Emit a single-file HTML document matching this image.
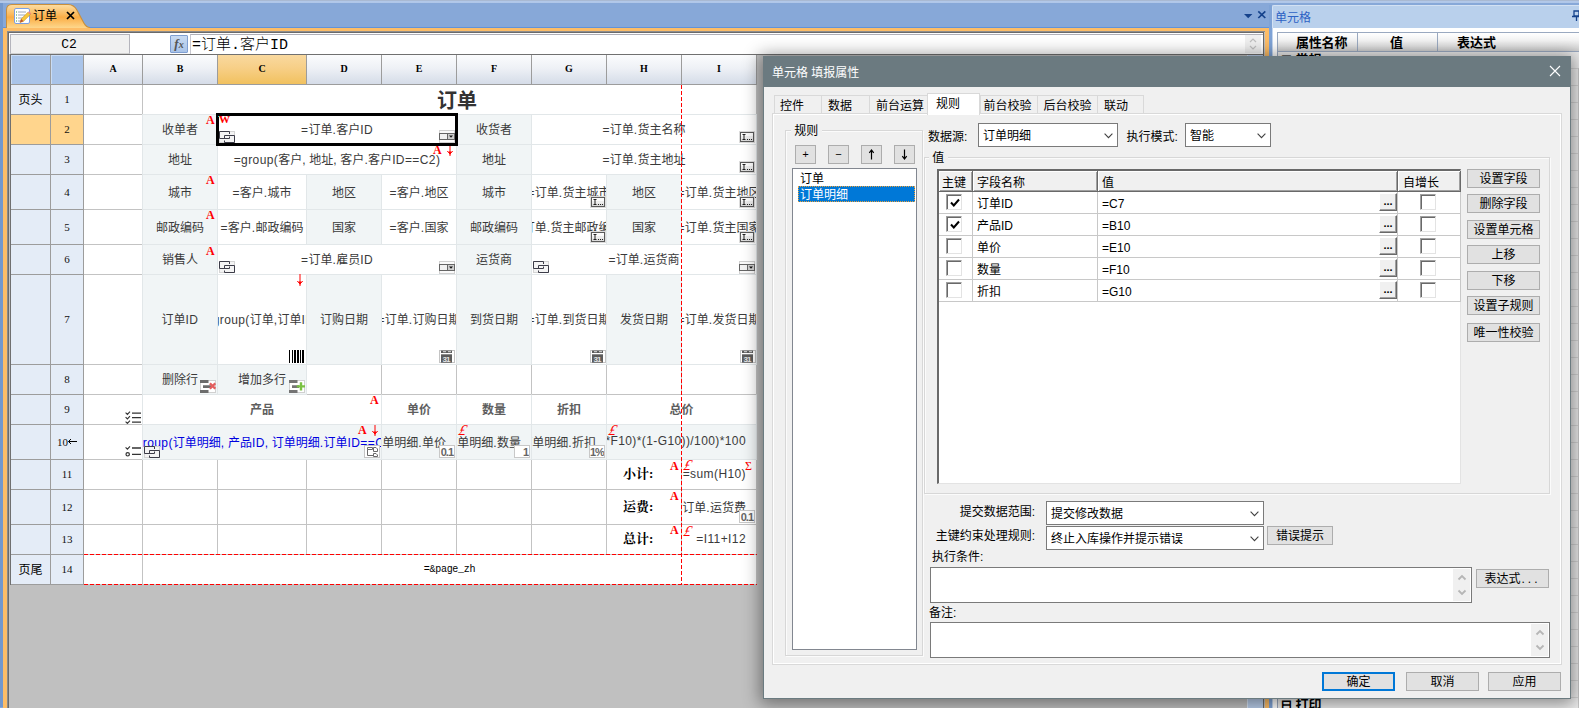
<!DOCTYPE html>
<html lang="zh-CN"><head><meta charset="utf-8"><title>订单</title>
<style>
*{box-sizing:border-box;margin:0;padding:0}
html,body{width:1579px;height:708px;overflow:hidden}
body{position:relative;background:#87a8d8;font-family:"Liberation Sans","Noto Sans CJK SC",sans-serif;font-size:12px;color:#000}
.abs{position:absolute}
#topstrip{left:0;top:0;width:1579px;height:3px;background:linear-gradient(#a9b9d2 0,#a9b9d2 33%,#b3c9e9 34%,#afc6e8)}
#leftedge{left:0;top:3px;width:3px;height:704px;background:#7398cd}
#oframe{left:3px;top:28px;width:1266px;height:680px;background:#fdbd67}
#docarea{left:7px;top:31px;width:1258px;height:677px;background:#c0c0c0;border-left:1px solid #8a8a8a;border-top:1px solid #8e8e8e}
#docarea2{left:8px;top:32px;width:1256px;height:676px;border-left:1px solid #6a6a6a;border-top:1px solid #6a6a6a;border-right:1px solid #6a6a6a}
#fbar{left:9px;top:33px;width:1254px;height:21px;background:#fff}
#tab{left:6px;top:4px;width:84px;height:24px}
#tabtxt{left:33px;top:9px;font-size:12px;line-height:15px;color:#000;white-space:nowrap}
#tabx{left:66px;top:11px;width:9px;height:9px}
#namebox{left:10px;top:34px;width:120px;height:20px;background:#f0f0f0;border:1px solid #b4b4bc;border-bottom-color:#d0d0d0;font-family:"Liberation Mono","Noto Sans CJK SC",monospace;font-size:13px;line-height:19px;text-align:center;color:#000;padding-right:2px}
#fx{left:170px;top:35px;width:18px;height:18px;border:1px solid #7f9fd2;background:linear-gradient(#c9dbf2,#a9c3e8);border-radius:1px;font-family:"Liberation Serif",serif;font-style:italic;font-weight:bold;font-size:13px;line-height:15px;color:#555;text-align:center}
#finput{left:190px;top:34px;width:1073px;height:20px;border:1px solid #b0b0b8;border-left-color:#c8c8d0;border-right:none;border-bottom:none;background:#fff}
#ftext{left:192px;top:36px;font-family:"Liberation Mono","Noto Sans CJK SC",monospace;font-size:15px;line-height:20px;letter-spacing:0;white-space:nowrap;color:#000;font-weight:300}
#fscroll{left:1245px;top:35px;width:16px;height:18px;background:#f0f0f0}
#grid{left:0;top:0;width:760px;height:590px}
.c{position:absolute;border:1px solid #c3c3c3;background:#fff;overflow:hidden;display:flex;align-items:center;justify-content:center;white-space:nowrap;font-size:12px;color:#3a3a3a}
.c.sh{background:#f1f5f6;border-color:#e2e7e9}
.c.lb{border-color:#e2e7e9}
.c.lb9{border-color:#c3c3c3 #e2e7e9 #e2e7e9 #e2e7e9}
.c.hd{border-color:#9c9c9c}
.corner{background:#a9c4e9;border-color:#9c9c9c;box-shadow:inset 1px 1px 0 #c9dcf5}
.ch{background:linear-gradient(#fbfcfd,#eef1f6 45%,#d5dce8);border-color:#9c9c9c;font-family:"Liberation Serif",serif;font-size:10px;color:#000;font-weight:bold;padding-bottom:2px}
.ch.hl{background:linear-gradient(#f9d99f,#f7cf87 45%,#f1c15f)}
.rh{background:#e4ecf7;border-color:#9c9c9c;color:#000}
.rh.hl{background:#ffd58d}
.rn{font-family:"Liberation Serif",serif;font-size:11px;padding-bottom:1px;color:#111}
.bt{font-size:12px;position:relative;top:-1px}
.l{letter-spacing:.4px}
.tx{position:relative;top:-1px}
.c.ra{justify-content:flex-end;padding-right:10px}
.b{font-weight:bold}
.c.b{color:#5e5e5e;font-weight:bold}
.ttl{font-size:20px;font-weight:bold;color:#333}
.blue{color:#0000e0}
.sim{font-family:"Liberation Serif","Noto Serif CJK SC",serif;font-weight:bold;color:#000;font-size:13px;position:relative;top:-2px}
.pz{font-family:"Liberation Mono",monospace;font-size:10px;color:#000;letter-spacing:-.3px}
.ic{position:absolute}
.red{position:absolute;color:#f00;font-family:"Liberation Serif",serif;font-weight:bold;font-size:12px;line-height:12px}
#sel{left:216px;top:113px;width:242px;height:33px;border:3px solid #000}

.idots{width:16px;height:12px;border:1px solid #d8d8d8;background:#fff;padding:0}
.idots:before{content:"";position:absolute;left:0;top:0;right:0;bottom:0;border:1px solid #5a5a5a;background:linear-gradient(#fff,#d8d8d8)}
.idots span{position:absolute;left:3px;top:0;font-family:"Liberation Mono",monospace;font-size:9px;line-height:10px;color:#222}
.idots b{position:absolute;left:8px;top:-2px;font-family:"Liberation Sans",sans-serif;font-size:8px;line-height:10px;color:#222;letter-spacing:-.3px;font-weight:bold}
.numi{width:16px;height:13px;border:1px solid #c8c8c8;background:#fff;font-family:"Liberation Sans",sans-serif;font-weight:bold;font-size:11px;line-height:12px;color:#666;text-align:right;letter-spacing:-1px;padding-right:1px;overflow:hidden;white-space:nowrap}
.vd{position:absolute;width:1px;background:repeating-linear-gradient(180deg,#f00 0,#f00 4px,transparent 4px,transparent 6px)}
.hdd{position:absolute;height:1px;background:repeating-linear-gradient(90deg,#f00 0,#f00 4px,transparent 4px,transparent 6px)}

.t{white-space:nowrap;font-size:12px;color:#000}
.dlg{background:#f0f0f0;border:1px solid #6b7b80;box-shadow:0 2px 16px 3px rgba(0,0,0,.42)}
.dtitle{background:#6b7a80}
.tabu{background:#f0f0f0;border:1px solid #d9d9d9;border-bottom:none}
.tabs{background:#fff;border:1px solid #d9d9d9;border-bottom:none}
.tpanel{background:#f0f0f0;border:1px solid #d9d9d9;box-shadow:inset 0 0 0 1px #fff}
.grp{border:1px solid #d7d7d7;box-shadow:inset 1px 1px 0 #fbfbfb,1px 1px 0 #fbfbfb}
.glab{background:#f0f0f0}
.btn{background:#e1e1e1;border:1px solid #adadad;text-align:center;font-size:12px;white-space:nowrap;color:#000}
.btn.def{border:2px solid #0078d7;line-height:16px !important}
.btn.sm{font-family:"Liberation Mono",monospace;font-size:11px}
.list{background:#fff;border:1px solid #828790}
.lsel{background:#0078d7;outline:1px dotted #e9a03a;outline-offset:-1px}
.selbox{background:#fff;border:1px solid #7a7a7a;padding-left:4px;padding-top:1px;white-space:nowrap;font-size:12px}
.tbl{background:#fff;border-top:2px solid #696969;border-left:2px solid #696969;border-right:1px solid #e3e3e3;border-bottom:1px solid #e3e3e3}
.th{background:#f0f0f0;border-right:1px solid #696969;border-bottom:1px solid #696969;box-shadow:inset 1px 1px 0 #fff,inset -1px -1px 0 #a0a0a0}
.cb{background:#fff;border:1px solid;border-color:#a0a0a0 #e3e3e3 #e3e3e3 #a0a0a0;box-shadow:inset 1px 1px 0 #696969}
.cb svg{position:absolute;left:2px;top:2px}
.b3{background:#f0f0f0;border:1px solid;border-color:#fff #696969 #696969 #fff;box-shadow:inset -1px -1px 0 #a0a0a0;text-align:center;font-size:11px;font-weight:bold;line-height:14px}
.ta{background:#fff;border:1px solid #7a7a7a}
.scr{position:absolute;right:1px;top:1px;bottom:1px;width:17px;background:#f0f0f0;display:flex;align-items:center;justify-content:center}
</style></head>
<body>
<div id="topstrip" class="abs"></div>
<div id="leftedge" class="abs"></div>
<div class="abs" style="left:3px;top:27px;width:1266px;height:1px;background:#6293d8"></div>
<div id="oframe" class="abs"></div>
<div class="abs" style="left:6px;top:4px;width:84px;height:24px;background:#c98f3c;clip-path:path('M0 24V6Q0 0 6 0H62Q68.5 0 71.5 6L78.5 19Q81 23 84 23V24Z')"></div>
<div class="abs" style="left:6px;top:4px;width:84px;height:24px;background:linear-gradient(#fce0a8,#fbb85a 45%,#fbad45 55%,#fdd78c);clip-path:path('M1 24V6Q1 1 6 1H62Q67.5 1 70.5 6.5L77.5 19.5Q80 24 84 24Z')"></div>
<svg class="abs" style="left:14px;top:8px" width="18" height="16" viewBox="0 0 18 16"><rect x=".5" y=".5" width="15" height="15" rx="1.5" fill="#fff" stroke="#7da0e0"/><g stroke="#9aa6b8" stroke-width="1"><path d="M4 4H12M4 7H11M4 10H9M4 13H8"/></g><g fill="#3a9a3a"><rect x="2" y="3.5" width="1" height="1"/><rect x="2" y="6.5" width="1" height="1"/><rect x="2" y="9.5" width="1" height="1"/><rect x="2" y="12.5" width="1" height="1"/></g><path d="M6 14.5 L7.2 11 L14 4.2 L16.3 6.5 L9.5 13.3 Z" fill="#f7c83a" stroke="#c98a1a" stroke-width=".6"/><path d="M6 14.5 L7.2 11 L9.5 13.3 Z" fill="#c05030"/><path d="M14 4.2 L15 3.2 L17.3 5.5 L16.3 6.5 Z" fill="#e88"/></svg>
<div id="tabtxt" class="abs">订单</div>
<svg id="tabx" class="abs" viewBox="0 0 9 9"><path d="M1 1L8 8M8 1L1 8" stroke="#000" stroke-width="1.7"/></svg>
<svg class="abs" style="left:1243px;top:10px" width="24" height="10" viewBox="0 0 24 10"><path d="M1 4H9.4L5.2 8.2Z" fill="#15428b"/><path d="M15.3 1.3L22.3 8M22.3 1.3L15.3 8" stroke="#15428b" stroke-width="1.7"/></svg>
<div id="docarea" class="abs"></div><div id="docarea2" class="abs"></div>
<div id="fbar" class="abs"></div>
<div id="namebox" class="abs">C2</div>
<div id="fx" class="abs">f<span style="font-size:10px">x</span></div>
<div id="finput" class="abs"></div>
<div id="ftext" class="abs">=订单.客户ID</div>
<div id="fscroll" class="abs"><svg width="16" height="18" viewBox="0 0 16 18"><path d="M5 7L8 4L11 7M5 11L8 14L11 11" fill="none" stroke="#c0c0c0" stroke-width="1.2"/></svg></div>
<div id="grid" class="abs">
<div class="c " style="left:83px;top:84px;width:60px;height:31px;"></div>
<div class="c " style="left:142px;top:84px;width:615px;height:31px;"><span class="ttl" style="margin-left:15px">订单</span></div>
<div class="c " style="left:83px;top:114px;width:60px;height:31px;"></div>
<div class="c " style="left:83px;top:144px;width:60px;height:31px;"></div>
<div class="c " style="left:83px;top:174px;width:60px;height:36px;"></div>
<div class="c " style="left:83px;top:209px;width:60px;height:36px;"></div>
<div class="c " style="left:83px;top:244px;width:60px;height:31px;"></div>
<div class="c " style="left:83px;top:274px;width:60px;height:91px;"></div>
<div class="c " style="left:83px;top:364px;width:60px;height:31px;"></div>
<div class="c " style="left:306px;top:364px;width:76px;height:31px;"></div>
<div class="c " style="left:381px;top:364px;width:76px;height:31px;"></div>
<div class="c " style="left:456px;top:364px;width:76px;height:31px;"></div>
<div class="c " style="left:531px;top:364px;width:76px;height:31px;"></div>
<div class="c " style="left:606px;top:364px;width:76px;height:31px;"></div>
<div class="c " style="left:681px;top:364px;width:76px;height:31px;"></div>
<div class="c " style="left:83px;top:394px;width:60px;height:31px;"></div>
<div class="c " style="left:83px;top:424px;width:60px;height:36px;"></div>
<div class="c " style="left:83px;top:459px;width:60px;height:31px;"></div>
<div class="c " style="left:142px;top:459px;width:76px;height:31px;"></div>
<div class="c " style="left:217px;top:459px;width:90px;height:31px;"></div>
<div class="c " style="left:306px;top:459px;width:76px;height:31px;"></div>
<div class="c " style="left:381px;top:459px;width:76px;height:31px;"></div>
<div class="c " style="left:456px;top:459px;width:76px;height:31px;"></div>
<div class="c " style="left:531px;top:459px;width:76px;height:31px;"></div>
<div class="c " style="left:606px;top:459px;width:76px;height:31px;justify-content:flex-start;padding-left:16px"><span class="sim">小计:</span></div>
<div class="c ra" style="left:681px;top:459px;width:76px;height:31px;"><span class="tx"><span class="l">=sum(H10)</span></span></div>
<div class="c " style="left:83px;top:489px;width:60px;height:36px;"></div>
<div class="c " style="left:142px;top:489px;width:76px;height:36px;"></div>
<div class="c " style="left:217px;top:489px;width:90px;height:36px;"></div>
<div class="c " style="left:306px;top:489px;width:76px;height:36px;"></div>
<div class="c " style="left:381px;top:489px;width:76px;height:36px;"></div>
<div class="c " style="left:456px;top:489px;width:76px;height:36px;"></div>
<div class="c " style="left:531px;top:489px;width:76px;height:36px;"></div>
<div class="c " style="left:606px;top:489px;width:76px;height:36px;justify-content:flex-start;padding-left:16px"><span class="sim">运费:</span></div>
<div class="c ra" style="left:681px;top:489px;width:76px;height:36px;"><span class="tx"><span class="l">=</span>订单<span class="l">.</span>运货费</span></div>
<div class="c " style="left:83px;top:524px;width:60px;height:31px;"></div>
<div class="c " style="left:142px;top:524px;width:76px;height:31px;"></div>
<div class="c " style="left:217px;top:524px;width:90px;height:31px;"></div>
<div class="c " style="left:306px;top:524px;width:76px;height:31px;"></div>
<div class="c " style="left:381px;top:524px;width:76px;height:31px;"></div>
<div class="c " style="left:456px;top:524px;width:76px;height:31px;"></div>
<div class="c " style="left:531px;top:524px;width:76px;height:31px;"></div>
<div class="c " style="left:606px;top:524px;width:76px;height:31px;justify-content:flex-start;padding-left:16px"><span class="sim">总计:</span></div>
<div class="c ra" style="left:681px;top:524px;width:76px;height:31px;"><span class="tx"><span class="l">=I11+I12</span></span></div>
<div class="c " style="left:83px;top:554px;width:60px;height:31px;"></div>
<div class="c " style="left:142px;top:554px;width:615px;height:31px;"><span class="pz">=&amp;page_zh</span></div>
<div class="c  lb" style="left:217px;top:114px;width:240px;height:31px;"><span class="tx"><span class="l">=</span>订单<span class="l">.</span>客户<span class="l">ID</span></span></div>
<div class="c  lb" style="left:531px;top:114px;width:226px;height:31px;"><span class="tx"><span class="l">=</span>订单<span class="l">.</span>货主名称</span></div>
<div class="c  lb" style="left:217px;top:144px;width:240px;height:31px;"><span class="tx"><span class="l">=group(</span>客户<span class="l">,</span> 地址<span class="l">,</span> 客户<span class="l">.</span>客户<span class="l">ID==C2)</span></span></div>
<div class="c  lb" style="left:531px;top:144px;width:226px;height:31px;"><span class="tx"><span class="l">=</span>订单<span class="l">.</span>货主地址</span></div>
<div class="c  lb" style="left:217px;top:174px;width:90px;height:36px;"><span class="tx"><span class="l">=</span>客户<span class="l">.</span>城市</span></div>
<div class="c  lb" style="left:381px;top:174px;width:76px;height:36px;"><span class="tx"><span class="l">=</span>客户<span class="l">.</span>地区</span></div>
<div class="c  lb" style="left:531px;top:174px;width:76px;height:36px;"><span class="tx"><span class="l">=</span>订单<span class="l">.</span>货主城市</span></div>
<div class="c  lb" style="left:681px;top:174px;width:76px;height:36px;"><span class="tx"><span class="l">=</span>订单<span class="l">.</span>货主地区</span></div>
<div class="c  lb" style="left:217px;top:209px;width:90px;height:36px;"><span class="tx"><span class="l">=</span>客户<span class="l">.</span>邮政编码</span></div>
<div class="c  lb" style="left:381px;top:209px;width:76px;height:36px;"><span class="tx"><span class="l">=</span>客户<span class="l">.</span>国家</span></div>
<div class="c  lb" style="left:531px;top:209px;width:76px;height:36px;"><span class="tx"><span class="l">=</span>订单<span class="l">.</span>货主邮政编码</span></div>
<div class="c  lb" style="left:681px;top:209px;width:76px;height:36px;"><span class="tx"><span class="l">=</span>订单<span class="l">.</span>货主国家</span></div>
<div class="c  lb" style="left:217px;top:244px;width:240px;height:31px;"><span class="tx"><span class="l">=</span>订单<span class="l">.</span>雇员<span class="l">ID</span></span></div>
<div class="c  lb" style="left:531px;top:244px;width:226px;height:31px;"><span class="tx"><span class="l">=</span>订单<span class="l">.</span>运货商</span></div>
<div class="c  lb" style="left:217px;top:274px;width:90px;height:91px;"><span class="tx"><span class="l">=group(</span>订单<span class="l">,</span>订单<span class="l">ID)</span></span></div>
<div class="c  lb" style="left:381px;top:274px;width:76px;height:91px;"><span class="tx"><span class="l">=</span>订单<span class="l">.</span>订购日期</span></div>
<div class="c  lb" style="left:531px;top:274px;width:76px;height:91px;"><span class="tx"><span class="l">=</span>订单<span class="l">.</span>到货日期</span></div>
<div class="c  lb" style="left:681px;top:274px;width:76px;height:91px;"><span class="tx"><span class="l">=</span>订单<span class="l">.</span>发货日期</span></div>
<div class="c b lb9" style="left:142px;top:394px;width:240px;height:31px;"><span class="tx">产品</span></div>
<div class="c b lb9" style="left:381px;top:394px;width:76px;height:31px;"><span class="tx">单价</span></div>
<div class="c b lb9" style="left:456px;top:394px;width:76px;height:31px;"><span class="tx">数量</span></div>
<div class="c b lb9" style="left:531px;top:394px;width:76px;height:31px;"><span class="tx">折扣</span></div>
<div class="c b lb9" style="left:606px;top:394px;width:151px;height:31px;"><span class="tx">总价</span></div>
<div class="c sh " style="left:142px;top:114px;width:76px;height:31px;"><span class="tx">收单者</span></div>
<div class="c sh " style="left:456px;top:114px;width:76px;height:31px;"><span class="tx">收货者</span></div>
<div class="c sh " style="left:142px;top:144px;width:76px;height:31px;"><span class="tx">地址</span></div>
<div class="c sh " style="left:456px;top:144px;width:76px;height:31px;"><span class="tx">地址</span></div>
<div class="c sh " style="left:142px;top:174px;width:76px;height:36px;"><span class="tx">城市</span></div>
<div class="c sh " style="left:306px;top:174px;width:76px;height:36px;"><span class="tx">地区</span></div>
<div class="c sh " style="left:456px;top:174px;width:76px;height:36px;"><span class="tx">城市</span></div>
<div class="c sh " style="left:606px;top:174px;width:76px;height:36px;"><span class="tx">地区</span></div>
<div class="c sh " style="left:142px;top:209px;width:76px;height:36px;"><span class="tx">邮政编码</span></div>
<div class="c sh " style="left:306px;top:209px;width:76px;height:36px;"><span class="tx">国家</span></div>
<div class="c sh " style="left:456px;top:209px;width:76px;height:36px;"><span class="tx">邮政编码</span></div>
<div class="c sh " style="left:606px;top:209px;width:76px;height:36px;"><span class="tx">国家</span></div>
<div class="c sh " style="left:142px;top:244px;width:76px;height:31px;"><span class="tx">销售人</span></div>
<div class="c sh " style="left:456px;top:244px;width:76px;height:31px;"><span class="tx">运货商</span></div>
<div class="c sh " style="left:142px;top:274px;width:76px;height:91px;"><span class="tx">订单<span class="l">ID</span></span></div>
<div class="c sh " style="left:306px;top:274px;width:76px;height:91px;"><span class="tx">订购日期</span></div>
<div class="c sh " style="left:456px;top:274px;width:76px;height:91px;"><span class="tx">到货日期</span></div>
<div class="c sh " style="left:606px;top:274px;width:76px;height:91px;"><span class="tx">发货日期</span></div>
<div class="c sh " style="left:142px;top:364px;width:76px;height:31px;"><span class="tx">删除行</span></div>
<div class="c sh " style="left:217px;top:364px;width:90px;height:31px;"><span class="tx">增加多行</span></div>
<div class="c sh blue" style="left:142px;top:424px;width:240px;height:36px;"><span class="tx"><span class="l">=group(</span>订单明细<span class="l">,</span> 产品<span class="l">ID,</span> 订单明细<span class="l">.</span>订单<span class="l">ID==C7)</span></span></div>
<div class="c sh ra" style="left:381px;top:424px;width:76px;height:36px;"><span class="tx"><span class="l">=</span>订单明细<span class="l">.</span>单价</span></div>
<div class="c sh ra" style="left:456px;top:424px;width:76px;height:36px;"><span class="tx"><span class="l">=</span>订单明细<span class="l">.</span>数量</span></div>
<div class="c sh ra" style="left:531px;top:424px;width:76px;height:36px;"><span class="tx"><span class="l">=</span>订单明细<span class="l">.</span>折扣</span></div>
<div class="c sh ra" style="left:606px;top:424px;width:151px;height:36px;"><span class="tx"><span class="l">=((E10*F10)*(1-G10))/100)*100</span></span></div>
<div class="c corner" style="left:10px;top:54px;width:41px;height:31px;"></div>
<div class="c corner" style="left:50px;top:54px;width:34px;height:31px;"></div>
<div class="c ch" style="left:83px;top:54px;width:60px;height:31px;">A</div>
<div class="c ch" style="left:142px;top:54px;width:76px;height:31px;">B</div>
<div class="c ch hl" style="left:217px;top:54px;width:90px;height:31px;">C</div>
<div class="c ch" style="left:306px;top:54px;width:76px;height:31px;">D</div>
<div class="c ch" style="left:381px;top:54px;width:76px;height:31px;">E</div>
<div class="c ch" style="left:456px;top:54px;width:76px;height:31px;">F</div>
<div class="c ch" style="left:531px;top:54px;width:76px;height:31px;">G</div>
<div class="c ch" style="left:606px;top:54px;width:76px;height:31px;">H</div>
<div class="c ch" style="left:681px;top:54px;width:76px;height:31px;">I</div>
<div class="c rh" style="left:10px;top:84px;width:41px;height:31px;"><span class="bt">页头</span></div>
<div class="c rh rn" style="left:50px;top:84px;width:34px;height:31px;">1</div>
<div class="c rh hl" style="left:10px;top:114px;width:41px;height:31px;"><span class="bt"></span></div>
<div class="c rh rn hl" style="left:50px;top:114px;width:34px;height:31px;">2</div>
<div class="c rh" style="left:10px;top:144px;width:41px;height:31px;"><span class="bt"></span></div>
<div class="c rh rn" style="left:50px;top:144px;width:34px;height:31px;">3</div>
<div class="c rh" style="left:10px;top:174px;width:41px;height:36px;"><span class="bt"></span></div>
<div class="c rh rn" style="left:50px;top:174px;width:34px;height:36px;">4</div>
<div class="c rh" style="left:10px;top:209px;width:41px;height:36px;"><span class="bt"></span></div>
<div class="c rh rn" style="left:50px;top:209px;width:34px;height:36px;">5</div>
<div class="c rh" style="left:10px;top:244px;width:41px;height:31px;"><span class="bt"></span></div>
<div class="c rh rn" style="left:50px;top:244px;width:34px;height:31px;">6</div>
<div class="c rh" style="left:10px;top:274px;width:41px;height:91px;"><span class="bt"></span></div>
<div class="c rh rn" style="left:50px;top:274px;width:34px;height:91px;">7</div>
<div class="c rh" style="left:10px;top:364px;width:41px;height:31px;"><span class="bt"></span></div>
<div class="c rh rn" style="left:50px;top:364px;width:34px;height:31px;">8</div>
<div class="c rh" style="left:10px;top:394px;width:41px;height:31px;"><span class="bt"></span></div>
<div class="c rh rn" style="left:50px;top:394px;width:34px;height:31px;">9</div>
<div class="c rh" style="left:10px;top:424px;width:41px;height:36px;"><span class="bt"></span></div>
<div class="c rh rn" style="left:50px;top:424px;width:34px;height:36px;">10<svg width="9" height="7" viewBox="0 0 9 7" style="margin-left:0"><path d="M.5 3.5H9M3 1L.5 3.5L3 6" fill="none" stroke="#000" stroke-width="1"/></svg></div>
<div class="c rh" style="left:10px;top:459px;width:41px;height:31px;"><span class="bt"></span></div>
<div class="c rh rn" style="left:50px;top:459px;width:34px;height:31px;">11</div>
<div class="c rh" style="left:10px;top:489px;width:41px;height:36px;"><span class="bt"></span></div>
<div class="c rh rn" style="left:50px;top:489px;width:34px;height:36px;">12</div>
<div class="c rh" style="left:10px;top:524px;width:41px;height:31px;"><span class="bt"></span></div>
<div class="c rh rn" style="left:50px;top:524px;width:34px;height:31px;">13</div>
<div class="c rh" style="left:10px;top:554px;width:41px;height:31px;"><span class="bt">页尾</span></div>
<div class="c rh rn" style="left:50px;top:554px;width:34px;height:31px;">14</div>
<div class="abs" style="left:10px;top:54px;width:1253px;height:1px;background:#707070"></div><div class="abs" style="left:10px;top:54px;width:1px;height:531px;background:#707070"></div>
<div id="sel" class="abs"></div>
<div class="vd" style="left:681px;top:85px;height:499px"></div><div class="hdd" style="left:84px;top:554px;width:673px"></div><div class="hdd" style="left:84px;top:584px;width:673px"></div>
<svg class="ic" style="left:219px;top:131px" width="16" height="12" viewBox="0 0 16 12"><rect x=".5" y=".5" width="15" height="11" fill="#f4f4f4" stroke="#d4d4d4"/><path d="M10.5 3V.5H.5V7.5H10.5V5.5M5.5 7.5V4.5H15.5V11.5H5.5V9.5" fill="none" stroke="#3c3c48" stroke-width="1"/></svg>
<svg class="ic" style="left:219px;top:261px" width="16" height="12" viewBox="0 0 16 12"><rect x=".5" y=".5" width="15" height="11" fill="#f4f4f4" stroke="#d4d4d4"/><path d="M10.5 3V.5H.5V7.5H10.5V5.5M5.5 7.5V4.5H15.5V11.5H5.5V9.5" fill="none" stroke="#3c3c48" stroke-width="1"/></svg>
<svg class="ic" style="left:533px;top:261px" width="16" height="12" viewBox="0 0 16 12"><rect x=".5" y=".5" width="15" height="11" fill="#f4f4f4" stroke="#d4d4d4"/><path d="M10.5 3V.5H.5V7.5H10.5V5.5M5.5 7.5V4.5H15.5V11.5H5.5V9.5" fill="none" stroke="#3c3c48" stroke-width="1"/></svg>
<svg class="ic" style="left:144px;top:445.5px" width="16" height="12" viewBox="0 0 16 12"><rect x=".5" y=".5" width="15" height="11" fill="#f4f4f4" stroke="#d4d4d4"/><path d="M10.5 3V.5H.5V7.5H10.5V5.5M5.5 7.5V4.5H15.5V11.5H5.5V9.5" fill="none" stroke="#3c3c48" stroke-width="1"/></svg>
<svg class="ic" style="left:439px;top:130px" width="16" height="13" viewBox="0 0 16 13"><rect x=".5" y=".5" width="15" height="12" fill="#fafafa" stroke="#d0d0d0"/><rect x=".5" y="3.5" width="15" height="6" fill="#f2f2f2" stroke="#666"/><rect x="8.5" y="3.5" width="7" height="6" fill="#cfcfcf" stroke="#666"/><path d="M10 5.5H14L12 7.8Z" fill="#111"/></svg>
<svg class="ic" style="left:439px;top:260.5px" width="16" height="13" viewBox="0 0 16 13"><rect x=".5" y=".5" width="15" height="12" fill="#fafafa" stroke="#d0d0d0"/><rect x=".5" y="3.5" width="15" height="6" fill="#f2f2f2" stroke="#666"/><rect x="8.5" y="3.5" width="7" height="6" fill="#cfcfcf" stroke="#666"/><path d="M10 5.5H14L12 7.8Z" fill="#111"/></svg>
<svg class="ic" style="left:739px;top:260.5px" width="16" height="13" viewBox="0 0 16 13"><rect x=".5" y=".5" width="15" height="12" fill="#fafafa" stroke="#d0d0d0"/><rect x=".5" y="3.5" width="15" height="6" fill="#f2f2f2" stroke="#666"/><rect x="8.5" y="3.5" width="7" height="6" fill="#cfcfcf" stroke="#666"/><path d="M10 5.5H14L12 7.8Z" fill="#111"/></svg>
<svg class="ic" style="left:739px;top:130.5px" width="16" height="12" viewBox="0 0 16 12"><rect x=".5" y=".5" width="15" height="11" fill="#fff" stroke="#dcdcdc"/><rect x="1.5" y="1.5" width="13" height="9" fill="#fbfbfb" stroke="#5a5a5a"/><rect x="2" y="5" width="12" height="2.5" fill="#ededed"/><rect x="2" y="7.5" width="12" height="2.5" fill="#dcdcdc"/><path d="M3.5 3.5H6.5M5 3.5V8.5M3.5 8.5H6.5" stroke="#222" stroke-width="1" fill="none"/><path d="M8 8.5H9M10 8.5H11M12 8.5H13" stroke="#222" stroke-width="1"/></svg>
<svg class="ic" style="left:739px;top:160.5px" width="16" height="12" viewBox="0 0 16 12"><rect x=".5" y=".5" width="15" height="11" fill="#fff" stroke="#dcdcdc"/><rect x="1.5" y="1.5" width="13" height="9" fill="#fbfbfb" stroke="#5a5a5a"/><rect x="2" y="5" width="12" height="2.5" fill="#ededed"/><rect x="2" y="7.5" width="12" height="2.5" fill="#dcdcdc"/><path d="M3.5 3.5H6.5M5 3.5V8.5M3.5 8.5H6.5" stroke="#222" stroke-width="1" fill="none"/><path d="M8 8.5H9M10 8.5H11M12 8.5H13" stroke="#222" stroke-width="1"/></svg>
<svg class="ic" style="left:589.5px;top:196px" width="16" height="12" viewBox="0 0 16 12"><rect x=".5" y=".5" width="15" height="11" fill="#fff" stroke="#dcdcdc"/><rect x="1.5" y="1.5" width="13" height="9" fill="#fbfbfb" stroke="#5a5a5a"/><rect x="2" y="5" width="12" height="2.5" fill="#ededed"/><rect x="2" y="7.5" width="12" height="2.5" fill="#dcdcdc"/><path d="M3.5 3.5H6.5M5 3.5V8.5M3.5 8.5H6.5" stroke="#222" stroke-width="1" fill="none"/><path d="M8 8.5H9M10 8.5H11M12 8.5H13" stroke="#222" stroke-width="1"/></svg>
<svg class="ic" style="left:739px;top:196px" width="16" height="12" viewBox="0 0 16 12"><rect x=".5" y=".5" width="15" height="11" fill="#fff" stroke="#dcdcdc"/><rect x="1.5" y="1.5" width="13" height="9" fill="#fbfbfb" stroke="#5a5a5a"/><rect x="2" y="5" width="12" height="2.5" fill="#ededed"/><rect x="2" y="7.5" width="12" height="2.5" fill="#dcdcdc"/><path d="M3.5 3.5H6.5M5 3.5V8.5M3.5 8.5H6.5" stroke="#222" stroke-width="1" fill="none"/><path d="M8 8.5H9M10 8.5H11M12 8.5H13" stroke="#222" stroke-width="1"/></svg>
<svg class="ic" style="left:589.5px;top:230.5px" width="16" height="12" viewBox="0 0 16 12"><rect x=".5" y=".5" width="15" height="11" fill="#fff" stroke="#dcdcdc"/><rect x="1.5" y="1.5" width="13" height="9" fill="#fbfbfb" stroke="#5a5a5a"/><rect x="2" y="5" width="12" height="2.5" fill="#ededed"/><rect x="2" y="7.5" width="12" height="2.5" fill="#dcdcdc"/><path d="M3.5 3.5H6.5M5 3.5V8.5M3.5 8.5H6.5" stroke="#222" stroke-width="1" fill="none"/><path d="M8 8.5H9M10 8.5H11M12 8.5H13" stroke="#222" stroke-width="1"/></svg>
<svg class="ic" style="left:739px;top:230.5px" width="16" height="12" viewBox="0 0 16 12"><rect x=".5" y=".5" width="15" height="11" fill="#fff" stroke="#dcdcdc"/><rect x="1.5" y="1.5" width="13" height="9" fill="#fbfbfb" stroke="#5a5a5a"/><rect x="2" y="5" width="12" height="2.5" fill="#ededed"/><rect x="2" y="7.5" width="12" height="2.5" fill="#dcdcdc"/><path d="M3.5 3.5H6.5M5 3.5V8.5M3.5 8.5H6.5" stroke="#222" stroke-width="1" fill="none"/><path d="M8 8.5H9M10 8.5H11M12 8.5H13" stroke="#222" stroke-width="1"/></svg>
<svg class="ic" style="left:439px;top:350px" width="16" height="13" viewBox="0 0 16 13"><rect x=".5" y=".5" width="15" height="12" fill="#fff" stroke="#c4c4c4"/><rect x="2" y=".5" width="11" height="2.5" fill="#5c5c5c"/><path d="M4 1.7H7M9 1.7H12" stroke="#ddd" stroke-width="1"/><rect x="2" y="4.3" width="11" height="8.4" fill="#5c5c5c"/><text x="7.5" y="11.5" font-family="Liberation Sans,sans-serif" font-size="8" font-weight="bold" fill="#e4e4e4" text-anchor="middle" textLength="8">31</text></svg>
<svg class="ic" style="left:589.5px;top:350px" width="16" height="13" viewBox="0 0 16 13"><rect x=".5" y=".5" width="15" height="12" fill="#fff" stroke="#c4c4c4"/><rect x="2" y=".5" width="11" height="2.5" fill="#5c5c5c"/><path d="M4 1.7H7M9 1.7H12" stroke="#ddd" stroke-width="1"/><rect x="2" y="4.3" width="11" height="8.4" fill="#5c5c5c"/><text x="7.5" y="11.5" font-family="Liberation Sans,sans-serif" font-size="8" font-weight="bold" fill="#e4e4e4" text-anchor="middle" textLength="8">31</text></svg>
<svg class="ic" style="left:739.5px;top:350px" width="16" height="13" viewBox="0 0 16 13"><rect x=".5" y=".5" width="15" height="12" fill="#fff" stroke="#c4c4c4"/><rect x="2" y=".5" width="11" height="2.5" fill="#5c5c5c"/><path d="M4 1.7H7M9 1.7H12" stroke="#ddd" stroke-width="1"/><rect x="2" y="4.3" width="11" height="8.4" fill="#5c5c5c"/><text x="7.5" y="11.5" font-family="Liberation Sans,sans-serif" font-size="8" font-weight="bold" fill="#e4e4e4" text-anchor="middle" textLength="8">31</text></svg>
<svg class="ic" style="left:289px;top:350px" width="16" height="13" viewBox="0 0 16 13"><path d="M0 0h1v13h-1zM3 0h1v13h-1zM5 0h2v13h-2zM8 0h2v13h-2zM11 0h1v13h-1zM13 0h2v13h-2z" fill="#000"/></svg>
<svg class="ic" style="left:200px;top:380px" width="16" height="13" viewBox="0 0 16 13"><rect x=".5" y=".5" width="15" height="12" fill="#fff" stroke="#d0d0d0"/><path d="M0 0H8.5V3H0ZM3 5.3H11V8H3ZM0 10H8.5V13H0Z" fill="#6c6c6c"/><path d="M9.9 3.4L15.3 8.8M15.3 3.4L9.9 8.8" stroke="#e45f5f" stroke-width="2.3"/></svg>
<svg class="ic" style="left:289px;top:380px" width="16" height="13" viewBox="0 0 16 13"><rect x=".5" y=".5" width="15" height="12" fill="#fff" stroke="#d0d0d0"/><path d="M0 0H8.5V3H0ZM3 5.3H10V8H3ZM0 10H8.5V13H0Z" fill="#747474"/><path d="M12 2.2V10.6M7.8 6.4H16" stroke="#7ac143" stroke-width="2.4"/></svg>
<svg class="ic" style="left:125px;top:410.5px" width="17" height="13" viewBox="0 0 17 13"><g fill="none" stroke="#333" stroke-width="1.3"><path d="M7 2.2H16M7 6.7H16M7 11.2H16"/><path d="M.6 1.6L2.4 3.4L5 .6M.6 6.1L2.4 7.9L5 5.1M.6 10.6L2.4 12.4L5 9.6" stroke-width="1.1"/></g></svg>
<svg class="ic" style="left:125px;top:445px" width="17" height="12" viewBox="0 0 17 12"><g fill="none" stroke="#333" stroke-width="1.3"><path d="M7 3H16M7 9.3H16"/><path d="M.6 2.4L2.4 4.2L5 1.4" stroke-width="1.1"/><circle cx="2.7" cy="9.3" r="1.7" stroke-width="1.2"/></g></svg>
<svg class="ic" style="left:364px;top:445px" width="16" height="13" viewBox="0 0 16 13"><rect x=".5" y=".5" width="15" height="12" fill="#fff" stroke="#c4c4c4"/><g fill="none" stroke="#6a6a6a" stroke-width="1"><path d="M3.5 2.5H8.5V4.5H3.5ZM3.5 4.5V10.5H9M9.5 2.5H12L13.5 4V6.5H9.5ZM9.5 8.5H12L13.5 10V11.5H9.5Z"/></g></svg>
<div class="ic numi" style="left:439px;top:445px">0.1</div>
<div class="ic numi" style="left:514px;top:445px">1</div>
<div class="ic numi" style="left:589px;top:445px">1%</div>
<div class="ic numi" style="left:739px;top:510px">0.1</div>
<div class="red" style="left:206px;top:114px;">A</div>
<div class="red" style="left:219px;top:113px;font-size:11px">W</div>
<div class="ic" style="left:218px;top:116px;width:1px;height:1px;background:#0cc"></div><div class="red" style="left:433px;top:144px;">A</div>
<svg class="ic" style="left:446.5px;top:146px" width="6" height="10" viewBox="0 0 6 10"><path d="M3 0V10" stroke="#f00" stroke-width="1"/><path d="M.3 5L3 8L5.7 5" fill="none" stroke="#f00" stroke-width="1"/><path d="M1.5 5.5H4.5L3 9Z" fill="#f00"/></svg>
<div class="red" style="left:206px;top:174px;">A</div>
<div class="red" style="left:206px;top:209px;">A</div>
<div class="red" style="left:206px;top:244.5px;">A</div>
<svg class="ic" style="left:296.5px;top:274px" width="6" height="12" viewBox="0 0 6 12"><path d="M3 0V12" stroke="#f00" stroke-width="1"/><path d="M.3 7L3 10L5.7 7" fill="none" stroke="#f00" stroke-width="1"/><path d="M1.5 7.5H4.5L3 11Z" fill="#f00"/></svg>
<div class="red" style="left:370px;top:394px;">A</div>
<div class="red" style="left:358px;top:424px;">A</div>
<svg class="ic" style="left:371.5px;top:425px" width="6" height="11" viewBox="0 0 6 11"><path d="M3 0V11" stroke="#f00" stroke-width="1"/><path d="M.3 6L3 9L5.7 6" fill="none" stroke="#f00" stroke-width="1"/><path d="M1.5 6.5H4.5L3 10Z" fill="#f00"/></svg>
<div class="red" style="left:459px;top:424px;font-style:italic;font-weight:normal;font-size:15px;line-height:13px;transform:skewX(-14deg)">&#163;</div>
<div class="red" style="left:609px;top:424px;font-style:italic;font-weight:normal;font-size:15px;line-height:13px;transform:skewX(-14deg)">&#163;</div>
<div class="red" style="left:670px;top:460px;">A</div>
<div class="red" style="left:684px;top:459px;font-style:italic;font-weight:normal;font-size:15px;line-height:13px;transform:skewX(-14deg)">&#163;</div>
<div class="red" style="left:745px;top:460px;font-weight:normal;font-size:12px">&#931;</div>
<div class="red" style="left:670px;top:489.5px;">A</div>
<div class="red" style="left:670px;top:524px;">A</div>
<div class="red" style="left:684px;top:524.5px;font-style:italic;font-weight:normal;font-size:15px;line-height:13px;transform:skewX(-14deg)">&#163;</div>
</div>
<div class="abs" style="left:1269px;top:5px;width:3px;height:703px;background:#7fa3d6"></div>
<div class="abs" style="left:1272px;top:5px;width:307px;height:24px;background:#b9d0ec;border-top:1px solid #d3e1f3;border-left:1px solid #d3e1f3;border-top-left-radius:2px"></div>
<div class="abs t" style="left:1275px;top:10px;font-size:12px;line-height:16px;color:#2d62c4">单元格</div>
<svg class="abs" style="left:1571px;top:10px" width="10" height="12" viewBox="0 0 10 12"><path d="M3 1H8V6H3ZM1 6.5H10M5.5 7V11" fill="none" stroke="#15428b" stroke-width="1.3"/></svg>
<div class="abs" style="left:1272px;top:28px;width:307px;height:680px;background:#fff;border-left:1px solid #c4d6ee"></div>
<div class="abs" style="left:1277px;top:52px;width:302px;height:656px;background:repeating-linear-gradient(#ececec 0,#ececec 16px,#d4d4d4 16px,#d4d4d4 17px);border-left:1px solid #9aa9c0"></div>
<div class="abs" style="left:1578px;top:68px;width:1px;height:640px;background:#c8c8c8"></div>
<div class="abs" style="left:1247px;top:55px;width:16px;height:653px;background:#b9cdea;border-left:1px solid #d8e4f4"></div>
<div class="abs" style="left:1277px;top:32px;width:302px;height:20px;background:linear-gradient(#fff,#f4f4f4 40%,#cfcfcf);border:1px solid #9aa9c0;border-right:none"></div>
<div class="abs" style="left:1357px;top:33px;width:1px;height:18px;background:#9aa9c0"></div>
<div class="abs" style="left:1437px;top:33px;width:1px;height:18px;background:#9aa9c0"></div>
<div class="abs t b" style="left:1296px;top:35px;font-size:13px;line-height:16px;letter-spacing:-.2px">属性名称</div>
<div class="abs t b" style="left:1390px;top:35px;font-size:13px;line-height:16px">值</div>
<div class="abs t b" style="left:1457px;top:35px;font-size:13px;line-height:16px">表达式</div>
<div class="abs t b" style="left:1281px;top:52px;font-size:13px;line-height:16px">&#8863; 常规</div>
<div class="abs t b" style="left:1281px;top:697px;font-size:13px;line-height:16px">&#8863; 打印</div>
<div class="abs dlg" style="left:763px;top:56px;width:808px;height:643px;"></div>
<div class="abs dtitle" style="left:763px;top:56px;width:808px;height:31px;"></div>
<div class="abs t " style="left:772px;top:64.5px;height:16px;line-height:16px;color:#fff">单元格 填报属性</div>
<svg class="abs" style="left:1549px;top:65px" width="12" height="12" viewBox="0 0 12 12"><path d="M1 1L11 11M11 1L1 11" stroke="#fff" stroke-width="1.1"/></svg>
<div class="abs tabu" style="left:774px;top:95px;width:48px;height:19px;"></div>
<div class="abs t " style="left:780px;top:97.5px;height:16px;line-height:16px;">控件</div>
<div class="abs tabu" style="left:821px;top:95px;width:49px;height:19px;"></div>
<div class="abs t " style="left:828px;top:97.5px;height:16px;line-height:16px;">数据</div>
<div class="abs tabu" style="left:869px;top:95px;width:60px;height:19px;"></div>
<div class="abs t " style="left:876px;top:97.5px;height:16px;line-height:16px;">前台运算</div>
<div class="abs tabu" style="left:980px;top:95px;width:58px;height:19px;"></div>
<div class="abs t " style="left:983.5px;top:97.5px;height:16px;line-height:16px;">前台校验</div>
<div class="abs tabu" style="left:1037px;top:95px;width:61px;height:19px;"></div>
<div class="abs t " style="left:1043.5px;top:97.5px;height:16px;line-height:16px;">后台校验</div>
<div class="abs tabu" style="left:1097px;top:95px;width:47px;height:19px;"></div>
<div class="abs t " style="left:1104px;top:97.5px;height:16px;line-height:16px;">联动</div>
<div class="abs tpanel" style="left:772px;top:113px;width:790px;height:552px;"></div>
<div class="abs tabs" style="left:927px;top:93px;width:53px;height:22px;"></div>
<div class="abs t " style="left:936px;top:95.5px;height:16px;line-height:16px;">规则</div>
<div class="abs grp" style="left:785px;top:130px;width:138px;height:526px;"></div>
<div class="abs t glab" style="left:791px;top:123px;height:16px;line-height:16px;">&nbsp;规则&nbsp;</div>
<div class="abs btn sm" style="left:795px;top:145px;width:21px;height:19px;line-height:18px">+</div>
<div class="abs btn sm" style="left:828px;top:145px;width:21px;height:19px;line-height:18px">&#8722;</div>
<div class="abs btn sm" style="left:861px;top:145px;width:21px;height:19px;line-height:18px"><svg width="7" height="11" viewBox="0 0 7 11" style="vertical-align:-2px"><path d="M3.5 10.5V1M1.3 3.8L3.5 1L5.7 3.8" fill="none" stroke="#000" stroke-width="1.2"/></svg></div>
<div class="abs btn sm" style="left:894px;top:145px;width:21px;height:19px;line-height:18px"><svg width="7" height="11" viewBox="0 0 7 11" style="vertical-align:-2px"><path d="M3.5 .5V10M1.3 7.2L3.5 10L5.7 7.2" fill="none" stroke="#000" stroke-width="1.2"/></svg></div>
<div class="abs list" style="left:792px;top:168px;width:125px;height:482px;"></div>
<div class="abs t " style="left:800px;top:171px;height:16px;line-height:16px;">订单</div>
<div class="abs lsel" style="left:798px;top:186px;width:117px;height:16px;"></div>
<div class="abs t " style="left:800px;top:187px;height:16px;line-height:16px;color:#fff">订单明细</div>
<div class="abs t " style="left:928px;top:129px;height:16px;line-height:16px;">数据源:</div>
<div class="abs selbox" style="left:978px;top:123px;width:140px;height:24px;line-height:23px"><span>订单明细</span><svg class="abs" style="right:4px;top:50%;margin-top:-2px" width="9" height="6" viewBox="0 0 9 6"><path d="M.6 .7L4.5 4.6L8.4 .7" fill="none" stroke="#404040" stroke-width="1.1"/></svg></div>
<div class="abs t " style="left:1126.5px;top:129px;height:16px;line-height:16px;">执行模式:</div>
<div class="abs selbox" style="left:1185px;top:123px;width:86px;height:24px;line-height:23px"><span>智能</span><svg class="abs" style="right:4px;top:50%;margin-top:-2px" width="9" height="6" viewBox="0 0 9 6"><path d="M.6 .7L4.5 4.6L8.4 .7" fill="none" stroke="#404040" stroke-width="1.1"/></svg></div>
<div class="abs grp" style="left:924px;top:157px;width:626px;height:337px;"></div>
<div class="abs t glab" style="left:929px;top:150px;height:16px;line-height:16px;">&nbsp;值&nbsp;</div>
<div class="abs tbl" style="left:937px;top:169px;width:524px;height:315px;"></div>
<div class="abs th" style="left:939px;top:171px;width:34px;height:21px;"></div>
<div class="abs th" style="left:973px;top:171px;width:125px;height:21px;"></div>
<div class="abs th" style="left:1098px;top:171px;width:300px;height:21px;"></div>
<div class="abs th" style="left:1398px;top:171px;width:63px;height:21px;"></div>
<div class="abs t " style="left:942px;top:175px;height:16px;line-height:16px;">主键</div>
<div class="abs t " style="left:977px;top:175px;height:16px;line-height:16px;">字段名称</div>
<div class="abs t " style="left:1102px;top:175px;height:16px;line-height:16px;">值</div>
<div class="abs t " style="left:1403px;top:175px;height:16px;line-height:16px;">自增长</div>
<div class="abs " style="left:939px;top:213px;width:521px;height:1px;background:#c8c8c8"></div>
<div class="abs " style="left:972px;top:192px;width:1px;height:22px;background:#c8c8c8"></div>
<div class="abs " style="left:1097px;top:192px;width:1px;height:22px;background:#c8c8c8"></div>
<div class="abs " style="left:1397px;top:192px;width:1px;height:22px;background:#c8c8c8"></div>
<div class="abs cb" style="left:946px;top:194px;width:16px;height:16px;"><svg width="12" height="12" viewBox="0 0 12 12"><path d="M2 5.5L4.8 8.5L10 2.5" fill="none" stroke="#000" stroke-width="2"/></svg></div>
<div class="abs t " style="left:977px;top:196px;height:16px;line-height:16px;">订单ID</div>
<div class="abs t " style="left:1102px;top:196px;height:16px;line-height:16px;">=C7</div>
<div class="abs b3" style="left:1379px;top:193px;width:18px;height:18px;"><span>...</span></div>
<div class="abs cb" style="left:1420px;top:194px;width:16px;height:16px;"></div>
<div class="abs " style="left:939px;top:235px;width:521px;height:1px;background:#c8c8c8"></div>
<div class="abs " style="left:972px;top:214px;width:1px;height:22px;background:#c8c8c8"></div>
<div class="abs " style="left:1097px;top:214px;width:1px;height:22px;background:#c8c8c8"></div>
<div class="abs " style="left:1397px;top:214px;width:1px;height:22px;background:#c8c8c8"></div>
<div class="abs cb" style="left:946px;top:216px;width:16px;height:16px;"><svg width="12" height="12" viewBox="0 0 12 12"><path d="M2 5.5L4.8 8.5L10 2.5" fill="none" stroke="#000" stroke-width="2"/></svg></div>
<div class="abs t " style="left:977px;top:218px;height:16px;line-height:16px;">产品ID</div>
<div class="abs t " style="left:1102px;top:218px;height:16px;line-height:16px;">=B10</div>
<div class="abs b3" style="left:1379px;top:215px;width:18px;height:18px;"><span>...</span></div>
<div class="abs cb" style="left:1420px;top:216px;width:16px;height:16px;"></div>
<div class="abs " style="left:939px;top:257px;width:521px;height:1px;background:#c8c8c8"></div>
<div class="abs " style="left:972px;top:236px;width:1px;height:22px;background:#c8c8c8"></div>
<div class="abs " style="left:1097px;top:236px;width:1px;height:22px;background:#c8c8c8"></div>
<div class="abs " style="left:1397px;top:236px;width:1px;height:22px;background:#c8c8c8"></div>
<div class="abs cb" style="left:946px;top:238px;width:16px;height:16px;"></div>
<div class="abs t " style="left:977px;top:240px;height:16px;line-height:16px;">单价</div>
<div class="abs t " style="left:1102px;top:240px;height:16px;line-height:16px;">=E10</div>
<div class="abs b3" style="left:1379px;top:237px;width:18px;height:18px;"><span>...</span></div>
<div class="abs cb" style="left:1420px;top:238px;width:16px;height:16px;"></div>
<div class="abs " style="left:939px;top:279px;width:521px;height:1px;background:#c8c8c8"></div>
<div class="abs " style="left:972px;top:258px;width:1px;height:22px;background:#c8c8c8"></div>
<div class="abs " style="left:1097px;top:258px;width:1px;height:22px;background:#c8c8c8"></div>
<div class="abs " style="left:1397px;top:258px;width:1px;height:22px;background:#c8c8c8"></div>
<div class="abs cb" style="left:946px;top:260px;width:16px;height:16px;"></div>
<div class="abs t " style="left:977px;top:262px;height:16px;line-height:16px;">数量</div>
<div class="abs t " style="left:1102px;top:262px;height:16px;line-height:16px;">=F10</div>
<div class="abs b3" style="left:1379px;top:259px;width:18px;height:18px;"><span>...</span></div>
<div class="abs cb" style="left:1420px;top:260px;width:16px;height:16px;"></div>
<div class="abs " style="left:939px;top:301px;width:521px;height:1px;background:#c8c8c8"></div>
<div class="abs " style="left:972px;top:280px;width:1px;height:22px;background:#c8c8c8"></div>
<div class="abs " style="left:1097px;top:280px;width:1px;height:22px;background:#c8c8c8"></div>
<div class="abs " style="left:1397px;top:280px;width:1px;height:22px;background:#c8c8c8"></div>
<div class="abs cb" style="left:946px;top:282px;width:16px;height:16px;"></div>
<div class="abs t " style="left:977px;top:284px;height:16px;line-height:16px;">折扣</div>
<div class="abs t " style="left:1102px;top:284px;height:16px;line-height:16px;">=G10</div>
<div class="abs b3" style="left:1379px;top:281px;width:18px;height:18px;"><span>...</span></div>
<div class="abs cb" style="left:1420px;top:282px;width:16px;height:16px;"></div>
<div class="abs " style="left:1460px;top:192px;width:1px;height:110px;background:#c8c8c8"></div>
<div class="abs btn " style="left:1467px;top:169px;width:73px;height:19px;line-height:18px">设置字段</div>
<div class="abs btn " style="left:1467px;top:194px;width:73px;height:19px;line-height:18px">删除字段</div>
<div class="abs btn " style="left:1467px;top:220px;width:73px;height:19px;line-height:18px">设置单元格</div>
<div class="abs btn " style="left:1467px;top:245px;width:73px;height:19px;line-height:18px">上移</div>
<div class="abs btn " style="left:1467px;top:271px;width:73px;height:19px;line-height:18px">下移</div>
<div class="abs btn " style="left:1467px;top:296px;width:73px;height:19px;line-height:18px">设置子规则</div>
<div class="abs btn " style="left:1467px;top:323px;width:73px;height:19px;line-height:18px">唯一性校验</div>
<div class="abs t " style="right:544px;top:504px;height:16px;line-height:16px;">提交数据范围:</div>
<div class="abs selbox" style="left:1046px;top:501px;width:218px;height:24px;line-height:23px"><span>提交修改数据</span><svg class="abs" style="right:4px;top:50%;margin-top:-2px" width="9" height="6" viewBox="0 0 9 6"><path d="M.6 .7L4.5 4.6L8.4 .7" fill="none" stroke="#404040" stroke-width="1.1"/></svg></div>
<div class="abs t " style="right:544px;top:527.5px;height:16px;line-height:16px;">主键约束处理规则:</div>
<div class="abs selbox" style="left:1046px;top:526px;width:218px;height:24px;line-height:23px"><span>终止入库操作并提示错误</span><svg class="abs" style="right:4px;top:50%;margin-top:-2px" width="9" height="6" viewBox="0 0 9 6"><path d="M.6 .7L4.5 4.6L8.4 .7" fill="none" stroke="#404040" stroke-width="1.1"/></svg></div>
<div class="abs btn " style="left:1267px;top:526px;width:66px;height:19px;line-height:18px">错误提示</div>
<div class="abs t " style="left:932px;top:548.5px;height:16px;line-height:16px;">执行条件:</div>
<div class="abs ta" style="left:930px;top:567px;width:542px;height:36px;"><div class="scr"><svg width="16" height="30" viewBox="0 0 16 30"><path d="M4.5 9.5L8 6L11.5 9.5M4.5 20.5L8 24L11.5 20.5" fill="none" stroke="#b6b6b6" stroke-width="1.8"/></svg></div></div>
<div class="abs btn " style="left:1476px;top:569px;width:73px;height:19px;line-height:18px">表达式<span style="letter-spacing:3px;margin-left:1px">...</span></div>
<div class="abs t " style="left:929px;top:605px;height:16px;line-height:16px;">备注:</div>
<div class="abs ta" style="left:930px;top:622px;width:620px;height:36px;"><div class="scr"><svg width="16" height="30" viewBox="0 0 16 30"><path d="M4.5 9.5L8 6L11.5 9.5M4.5 20.5L8 24L11.5 20.5" fill="none" stroke="#b6b6b6" stroke-width="1.8"/></svg></div></div>
<div class="abs btn def" style="left:1322px;top:672px;width:73px;height:19px;line-height:18px">确定</div>
<div class="abs btn " style="left:1406px;top:672px;width:73px;height:19px;line-height:18px">取消</div>
<div class="abs btn " style="left:1488px;top:672px;width:73px;height:19px;line-height:18px">应用</div>
</body></html>
